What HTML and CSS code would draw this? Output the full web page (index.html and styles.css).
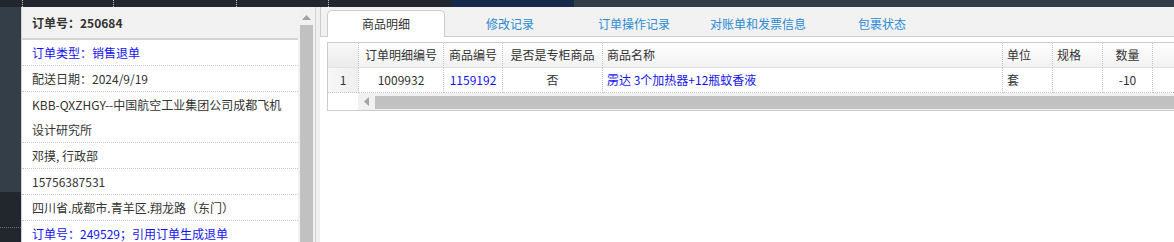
FILE: index.html
```html
<!DOCTYPE html>
<html lang="zh-CN">
<head>
<meta charset="utf-8">
<title>订单详情</title>
<link rel="stylesheet" href="styles.css">
</head>
<body>
<div class="topbar">
  <div class="tb tb1"></div>
  <div class="tb tb2"></div>
  <div class="tb tb3"></div>
  <div class="tb tb4"></div>
  <div class="tb tb5"></div>
  <div class="tb tb-navy"></div>
  <div class="tb tb-slate"></div>
</div>
<div class="main">
  <div class="sidebar">
    <div class="sb-top"></div>
    <div class="sb-bottom"><div class="sb-line"></div></div>
  </div>
  <div class="panel">
    <div class="panel-head">订单号：250684</div>
    <div class="prow blue">订单类型：销售退单</div>
    <div class="prow">配送日期：2024/9/19</div>
    <div class="prow">KBB-QXZHGY--中国航空工业集团公司成都飞机设计研究所</div>
    <div class="prow">邓摸, 行政部</div>
    <div class="prow">15756387531</div>
    <div class="prow">四川省.成都市.青羊区.翔龙路（东门）</div>
    <div class="prow blue">订单号：249529；引用订单生成退单</div>
  </div>
  <div class="vscroll">
    <div class="vs-btn"><svg width="9" height="5" viewBox="0 0 9 5"><polygon points="0,5 9,5 4.5,0" fill="#a3a3a3"/></svg></div>
    <div class="vs-thumb"></div>
  </div>
  <div class="splitter"></div>
  <div class="content">
    <div class="tabs">
      <div class="tab active">商品明细</div>
      <div class="tab">修改记录</div>
      <div class="tab">订单操作记录</div>
      <div class="tab">对账单和发票信息</div>
      <div class="tab">包裹状态</div>
    </div>
    <div class="grid-wrap">
      <div class="grid">
        <div class="c hd rn"></div>
        <div class="c hd ctr">订单明细编号</div>
        <div class="c hd ctr">商品编号</div>
        <div class="c hd ctr">是否是专柜商品</div>
        <div class="c hd">商品名称</div>
        <div class="c hd">单位</div>
        <div class="c hd">规格</div>
        <div class="c hd ctr">数量</div>
        <div class="c hd last"></div>

        <div class="c rn ctr">1</div>
        <div class="c ctr">1009932</div>
        <div class="c ctr blue">1159192</div>
        <div class="c ctr">否</div>
        <div class="c blue">雳达 3个加热器+12瓶蚊香液</div>
        <div class="c">套</div>
        <div class="c"></div>
        <div class="c ctr">-10</div>
        <div class="c last"></div>
      </div>
      <div class="hscroll">
        <div class="hs-corner"></div>
        <div class="hs-btn"><svg width="5" height="9" viewBox="0 0 5 9"><polygon points="5,0 5,9 0,4.5" fill="#a3a3a3"/></svg></div>
        <div class="hs-thumb"></div>
      </div>
    </div>
  </div>
</div>
</body>
</html>
```
FILE: styles.css
```css
* { box-sizing: border-box; }
html, body { margin: 0; padding: 0; }
body {
  width: 1174px;
  height: 242px;
  overflow: hidden;
  background: #fff;
  font-family: "Noto Sans CJK SC", "Noto Sans", sans-serif;
  font-size: 12px;
  color: #333;
}
.blue { color: #1414f0; }

.topbar { display: flex; height: 7px; background: #22262d; }
.tb { height: 7px; border-right: 1px dotted rgba(255,255,255,0.75); flex: none; }
.tb1 { width: 23px; }
.tb2 { width: 91px; }
.tb3 { width: 123px; }
.tb4 { width: 92px; }
.tb5 { width: 122px; border-right: 0; }
.tb-navy { width: 123px; background: #16294b; border-right: 0; }
.tb-slate { flex: 1; background: #343e49; border-right: 0; }

.main { display: flex; height: 235px; overflow: hidden; }

.sidebar { width: 21px; display: flex; flex-direction: column; flex: none; }
.sb-top { height: 185px; background: #343e48; }
.sb-bottom { flex: 1; background: #22262d; padding-top: 35px; }
.sb-line { border-top: 1px dotted #6b7078; }

.panel {
  width: 277px;
  flex: none;
  overflow: hidden;
  border-left: 1px solid #cfcfcf;
  background: #fff;
}
.panel-head {
  height: 33px;
  line-height: 31px;
  background: #f2f2f2;
  border-bottom: 2px solid #d4d4d4;
  padding: 0 10px;
  font-weight: bold;
}
.prow {
  line-height: 25px;
  padding: 0 12px 0 10px;
  border-bottom: 1px dotted #c8c8c8;
}

.vscroll { width: 17px; flex: none; overflow: hidden; background: #f1f1f1; }
.vs-btn { height: 18px; display: flex; align-items: center; justify-content: center; padding-top: 2px; }
.vs-thumb { margin: 0 2px; height: 217px; background: #c1c1c1; }

.splitter { width: 5px; flex: none; background: #efefef; border-left: 1px solid #d2d2d2; }

.content { flex: 1; overflow: hidden; background: #fff; }
.tabs {
  display: flex;
  gap: 6px;
  height: 30px;
  padding: 3px 0 0 6px;
  background: #f2f2f2;
  border-left: 1px solid #cccccc;
  border-bottom: 1px solid #cccccc;
}
.tab {
  width: 118px;
  height: 27px;
  line-height: 25px;
  text-align: center;
  color: #2b8ad3;
  border: 1px solid transparent;
  border-bottom: 0;
  flex: none;
}
.tab.active {
  background: #fff;
  color: #333;
  border-color: #cccccc;
  border-radius: 5px 5px 0 0;
}

.grid-wrap {
  margin: 5px 0 0 7px;
  width: 1000px;
  border: 1px solid #cccccc;
}
.grid {
  display: grid;
  grid-template-columns: 31px 85px 59px 100px 400px 50px 50px 50px 1fr;
}
.c {
  height: 25px;
  line-height: 24px;
  padding: 0 4px;
  border-right: 1px dotted #c4c4c4;
  border-bottom: 1px dotted #c4c4c4;
  white-space: nowrap;
  overflow: hidden;
}
.c.hd {
  background: linear-gradient(#ffffff, #f1f1f1);
  border-bottom: 1px solid #e2e2e2;
}
.c.rn { background: linear-gradient(90deg, #f7f7f7, #efefef); }
.c.hd.rn { background: linear-gradient(#f8f8f8, #ececec); }
.c.last { border-right: 0; }
.ctr { text-align: center; }

.hscroll { display: flex; height: 17px; }
.hs-corner { width: 30px; background: #fff; flex: none; }
.hs-btn { width: 17px; flex: none; background: #f1f1f1; display: flex; align-items: center; justify-content: center; }
.hs-thumb { flex: 1; background: #c1c1c1; border-top: 3px solid #f1f1f1; border-bottom: 1px solid #f1f1f1; }
```
